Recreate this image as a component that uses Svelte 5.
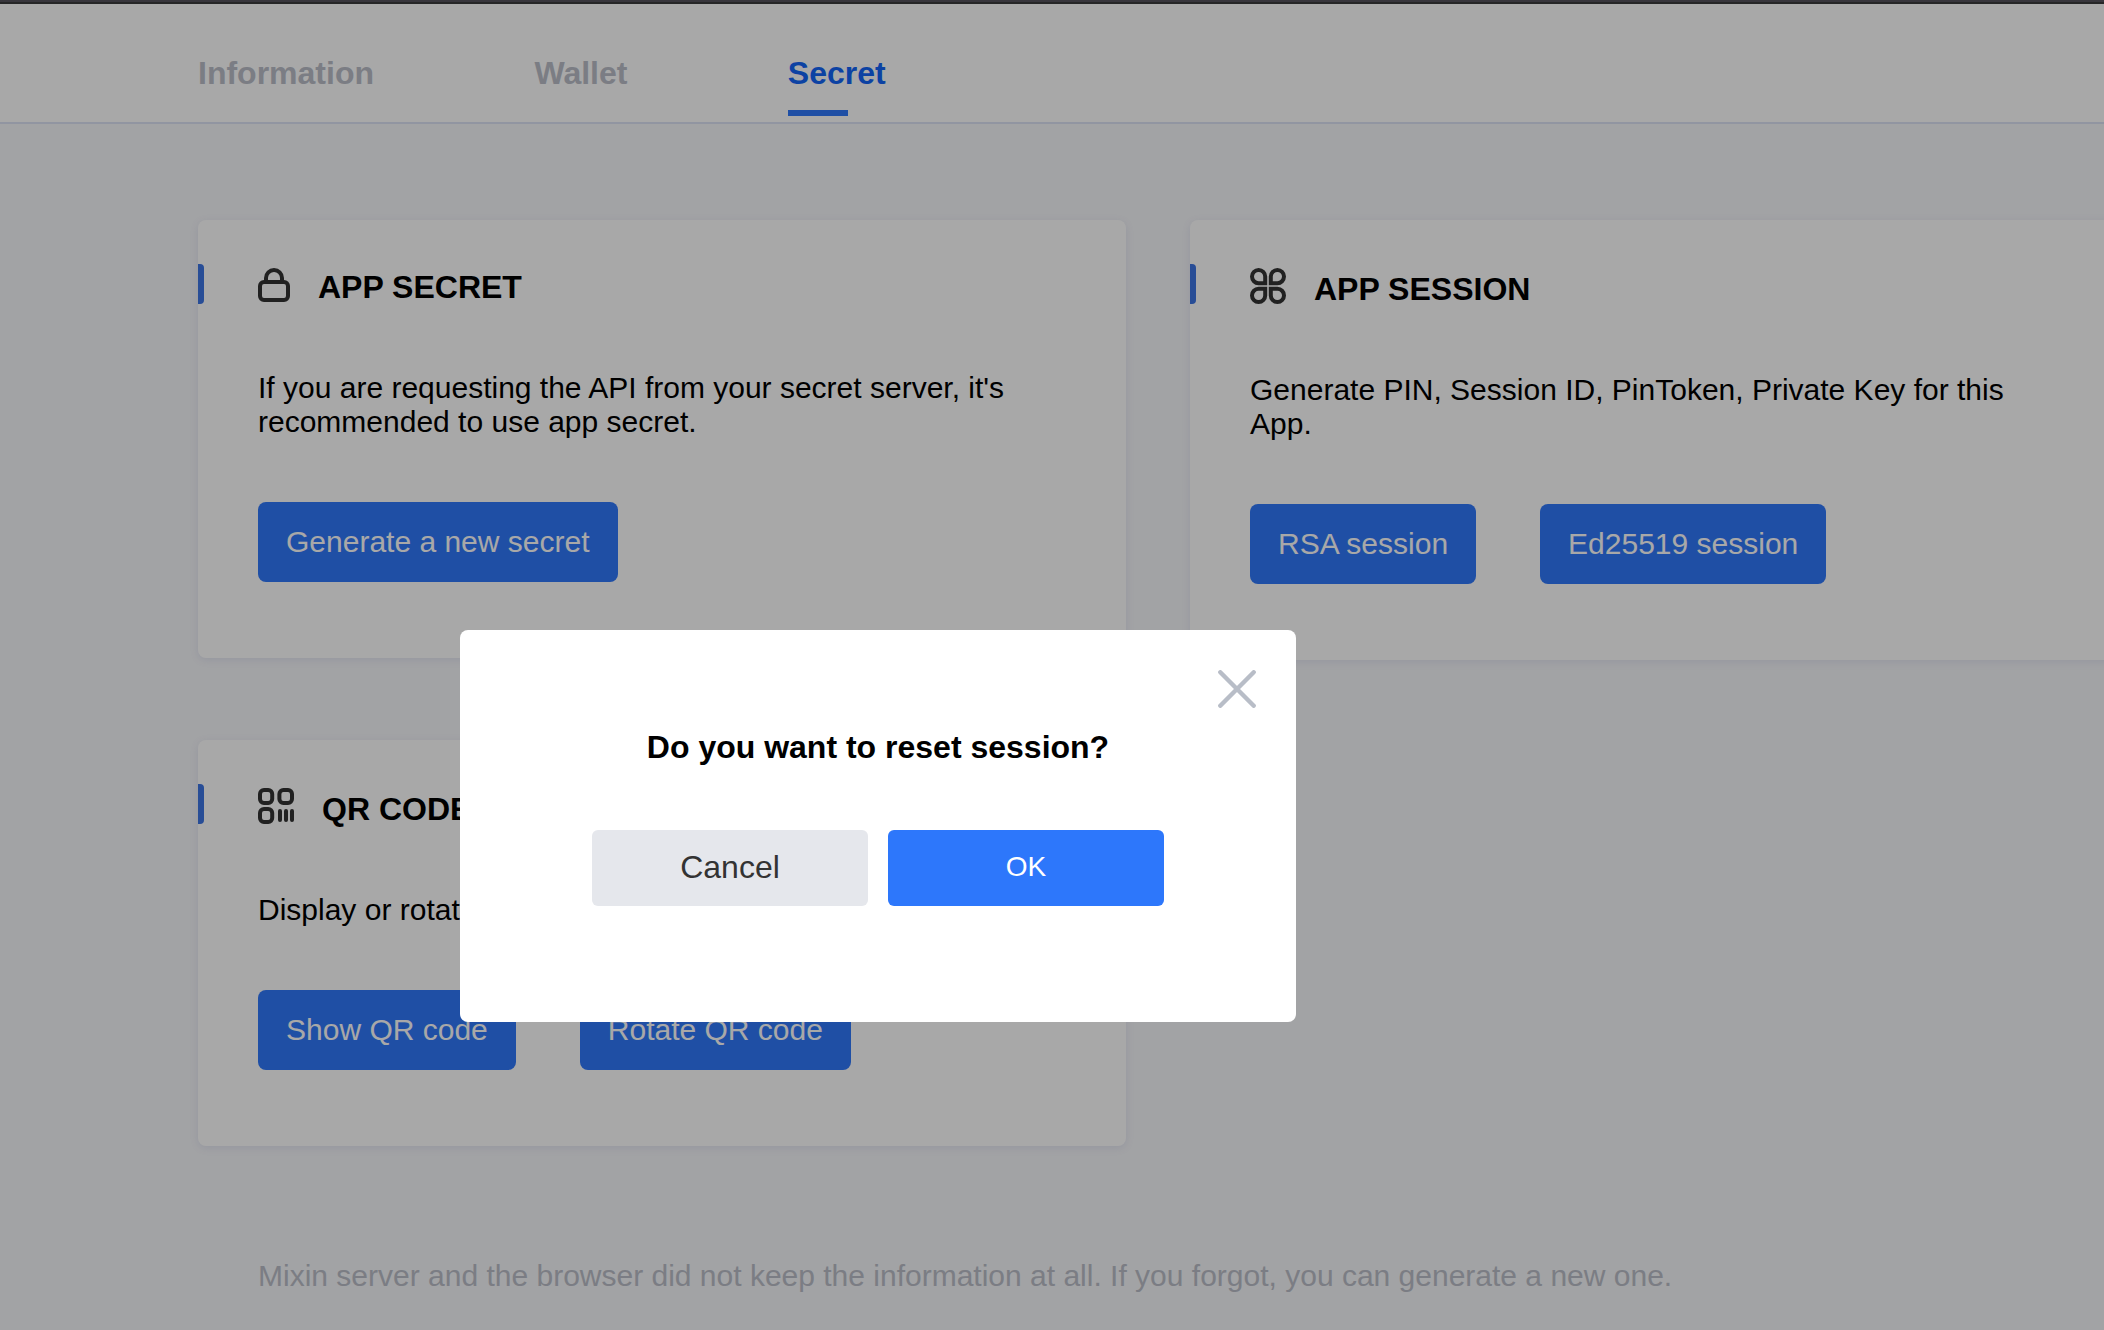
<script>
  const tabs = ['Information', 'Wallet', 'Secret'];
  const active = 'Secret';

  const cards = [
    {
      icon: 'lock',
      title: 'APP SECRET',
      text: "If you are requesting the API from your secret server, it's recommended to use app secret.",
      actions: ['Generate a new secret']
    },
    {
      icon: 'command',
      title: 'APP SESSION',
      text: 'Generate PIN, Session ID, PinToken, Private Key for this App.',
      actions: ['RSA session', 'Ed25519 session']
    },
    {
      icon: 'qr',
      title: 'QR CODE',
      text: 'Display or rotate QR code.',
      actions: ['Show QR code', 'Rotate QR code']
    }
  ];
</script>

<div class="page">
  <div class="window-edge"></div>
  <nav>
    {#each tabs as tab}
      <span class="tab" class:active={tab === active}>{tab}</span>
    {/each}
  </nav>

  <main>
    {#each cards as card}
      <section class="card">
        <header class:tall={card.icon !== 'lock'}>
          {#if card.icon === 'lock'}
            <svg width="32" height="34" viewBox="0 0 32 34" fill="none" stroke="#333" stroke-width="4">
              <rect x="2" y="14" width="28" height="18" rx="4" />
              <path d="M8 14V10a8 8 0 0 1 16 0V14" />
            </svg>
          {:else if card.icon === 'command'}
            <svg width="36" height="36" viewBox="0 0 36 36" fill="none" stroke="#333" stroke-width="4">
              <path d="M15.2 15.2H8.6A6.6 6.6 0 1 1 15.2 8.6Z" />
              <path d="M20.8 15.2H27.4A6.6 6.6 0 1 0 20.8 8.6Z" />
              <path d="M15.2 20.8H8.6A6.6 6.6 0 1 0 15.2 27.4Z" />
              <path d="M20.8 20.8H27.4A6.6 6.6 0 1 1 20.8 27.4Z" />
            </svg>
          {:else}
            <svg width="36" height="36" viewBox="0 0 36 36" fill="none" stroke="#333" stroke-width="4">
              <rect x="2" y="2" width="12.2" height="13" rx="4" />
              <rect x="21.4" y="2" width="12.6" height="13" rx="4" />
              <rect x="2" y="21" width="12.2" height="13" rx="4" />
              <path d="M22 23V32M28 23V32M34 23V32" stroke-linecap="round" />
            </svg>
          {/if}
          <h2>{card.title}</h2>
        </header>
        <p>{card.text}</p>
        <div class="actions">
          {#each card.actions as action}
            <button>{action}</button>
          {/each}
        </div>
      </section>
    {/each}
  </main>

  <p class="note">Mixin server and the browser did not keep the information at all. If you forgot, you can generate a new one.</p>

  <div class="overlay">
    <div class="modal">
      <svg class="close" width="38" height="38" viewBox="0 0 38 38" stroke="#b8bdc7" stroke-width="4.4" stroke-linecap="round">
        <path d="M2.3 2.3L35.7 35.7M35.7 2.3L2.3 35.7" />
      </svg>
      <h3>Do you want to reset session?</h3>
      <div class="choices">
        <button class="cancel">Cancel</button>
        <button class="ok">OK</button>
      </div>
    </div>
  </div>
</div>

<style>
  :global(body) {
    margin: 0;
    overflow: hidden;
  }

  .page {
    position: relative;
    box-sizing: border-box;
    width: 2104px;
    height: 1330px;
    overflow: hidden;
    background: #f6f7fa;
    color: #000;
    font-family: 'Liberation Sans', Arial, sans-serif;
  }

  .window-edge {
    height: 2px;
    background: #55535c;
    border-bottom: 2px solid #3a3a3c;
  }

  nav {
    box-sizing: border-box;
    height: 120px;
    display: flex;
    gap: 160.4px;
    padding: 51px 198px 0;
    background: #fff;
    border-bottom: 2px solid #dde2f5;
  }

  .tab {
    box-sizing: border-box;
    height: 61px;
    font-size: 32px;
    line-height: 36px;
    font-weight: 700;
    color: #bbbec8;
  }

  .tab.active {
    color: #1365f8;
  }

  .tab.active::after {
    content: '';
    display: block;
    width: 60px;
    height: 6px;
    margin-top: 19px;
    background: #2f78fb;
  }

  main {
    display: grid;
    grid-template-columns: 928px 928px;
    column-gap: 64px;
    row-gap: 80px;
    align-items: start;
    padding: 96px 0 0 198px;
  }

  .card {
    box-sizing: border-box;
    padding: 44px 60px 76px 0;
    border-radius: 8px;
    background: #fff;
    box-shadow: 0 2px 9px rgba(90, 100, 180, 0.12);
  }

  header {
    display: flex;
    align-items: flex-start;
    height: 40px;
  }

  header.tall {
    height: 42px;
  }

  header::before {
    content: '';
    width: 6px;
    height: 40px;
    margin-right: 54px;
    border-radius: 0 4px 4px 0;
    background: #3d75e4;
  }

  header svg {
    display: block;
    margin-top: 4px;
  }

  h2 {
    margin: 0 0 -1px 28px;
    align-self: flex-end;
    font-size: 32px;
    line-height: 36px;
    font-weight: 700;
  }

  .card p {
    margin: 67px 0 0 60px;
    font-size: 30px;
    line-height: 34px;
  }

  .actions {
    display: flex;
    gap: 64px;
    margin: 63px 0 0 60px;
  }

  button {
    display: block;
    margin: 0;
    border: 0;
    font-family: inherit;
  }

  .actions button {
    height: 80px;
    padding: 0 28px;
    border-radius: 8px;
    background: #2f78fb;
    color: #fff;
    font-size: 30px;
    line-height: 80px;
    white-space: nowrap;
  }

  .note {
    margin: 113px 0 0 258px;
    font-size: 30px;
    line-height: 34px;
    color: #bbbec8;
  }

  .overlay {
    position: absolute;
    inset: 0;
    background: rgba(0, 0, 0, 0.34);
  }

  .modal {
    position: absolute;
    left: 460px;
    top: 630px;
    box-sizing: border-box;
    width: 836px;
    height: 392px;
    padding: 40px;
    display: flex;
    flex-direction: column;
    align-items: center;
    border-radius: 8px;
    background: #fff;
  }

  .close {
    align-self: flex-end;
  }

  h3 {
    margin: 21px 0 65px;
    font-size: 32px;
    line-height: 36px;
    font-weight: 700;
  }

  .choices {
    display: flex;
    gap: 20px;
  }

  .choices button {
    width: 276px;
    height: 76px;
    padding: 0 0 2px;
    border-radius: 6px;
  }

  .choices .cancel {
    background: #e5e7ec;
    color: #333;
    font-size: 32px;
  }

  .choices .ok {
    background: #2d77fb;
    color: #fff;
    font-size: 28px;
  }
</style>
